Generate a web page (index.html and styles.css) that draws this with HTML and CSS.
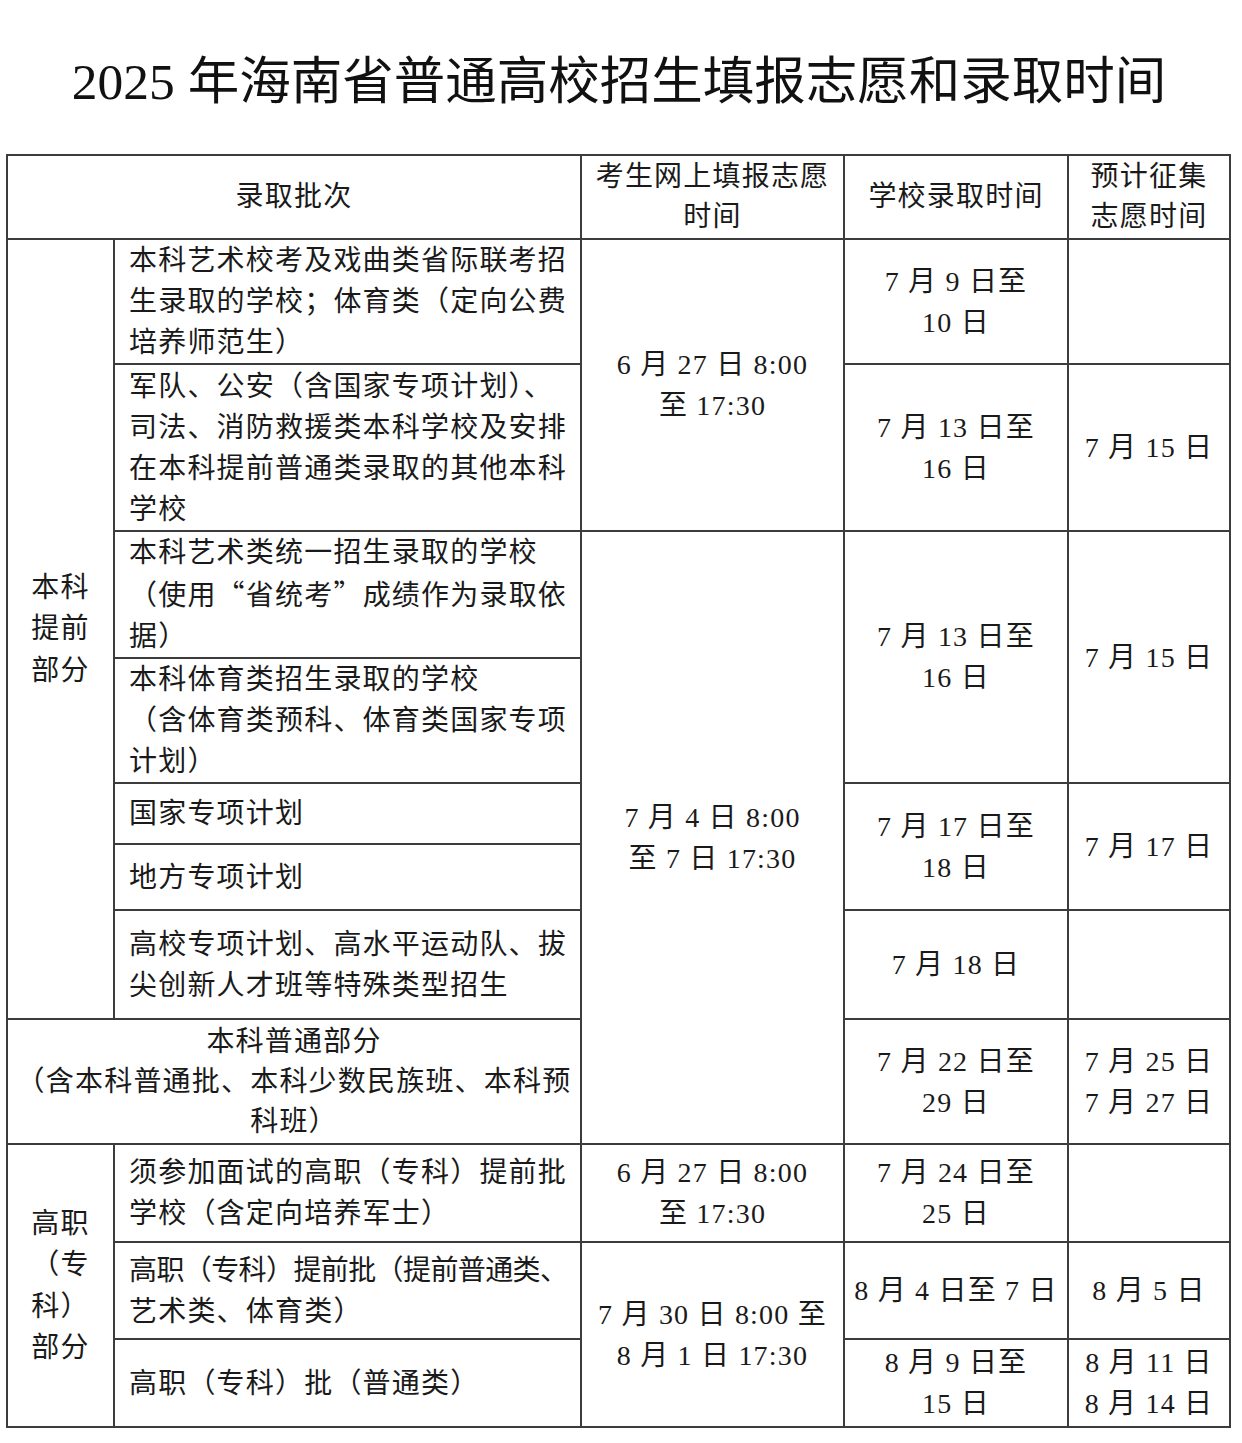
FILE: index.html
```html
<!DOCTYPE html>
<html lang="zh-CN">
<head>
<meta charset="utf-8">
<title>2025年海南省普通高校招生填报志愿和录取时间</title>
<link rel="stylesheet" href="styles.css">
</head>
<body>
<h1 class="title">2025 年海南省普通高校招生填报志愿和录取时间</h1>
<table class="sched">
  <colgroup>
    <col class="c1"><col class="c2"><col class="c3"><col class="c4"><col class="c5">
  </colgroup>
  <tr class="h-head">
    <th colspan="2">录取批次</th>
    <th>考生网上填报志愿<br>时间</th>
    <th>学校录取时间</th>
    <th>预计征集<br>志愿时间</th>
  </tr>
  <tr class="h-r1">
    <td rowspan="7" class="grp">本科<br>提前<br>部分</td>
    <td class="txt">本科艺术校考及戏曲类省际联考招<br>生录取的学校；体育类（定向公费<br>培养师范生）</td>
    <td rowspan="2" class="num">6 月 27 日 8:00<br>至 17:30</td>
    <td class="num">7 月 9 日至<br>10 日</td>
    <td></td>
  </tr>
  <tr class="h-r2">
    <td class="txt">军队、公安（含国家专项计划）、<br>司法、消防救援类本科学校及安排<br>在本科提前普通类录取的其他本科<br>学校</td>
    <td class="num">7 月 13 日至<br>16 日</td>
    <td class="num">7 月 15 日</td>
  </tr>
  <tr class="h-r3">
    <td class="txt">本科艺术类统一招生录取的学校<br>（使用<span class="q">“</span>省统考<span class="q">”</span>成绩作为录取依<br>据）</td>
    <td rowspan="6" class="num">7 月 4 日 8:00<br>至 7 日 17:30</td>
    <td rowspan="2" class="num">7 月 13 日至<br>16 日</td>
    <td rowspan="2" class="num">7 月 15 日</td>
  </tr>
  <tr class="h-r4">
    <td class="txt">本科体育类招生录取的学校<br>（含体育类预科、体育类国家专项<br>计划）</td>
  </tr>
  <tr class="h-r5">
    <td class="txt">国家专项计划</td>
    <td rowspan="2" class="num">7 月 17 日至<br>18 日</td>
    <td rowspan="2" class="num">7 月 17 日</td>
  </tr>
  <tr class="h-r6">
    <td class="txt">地方专项计划</td>
  </tr>
  <tr class="h-r7">
    <td class="txt">高校专项计划、高水平运动队、拔<br>尖创新人才班等特殊类型招生</td>
    <td class="num">7 月 18 日</td>
    <td></td>
  </tr>
  <tr class="h-r8">
    <td colspan="2" class="mid">本科普通部分<br>（含本科普通批、本科少数民族班、本科预<br>科班）</td>
    <td class="num">7 月 22 日至<br>29 日</td>
    <td class="num">7 月 25 日<br>7 月 27 日</td>
  </tr>
  <tr class="h-r9">
    <td rowspan="3" class="grp">高职<br>（专<br>科）<br>部分</td>
    <td class="txt">须参加面试的高职（专科）提前批<br>学校（含定向培养军士）</td>
    <td class="num">6 月 27 日 8:00<br>至 17:30</td>
    <td class="num">7 月 24 日至<br>25 日</td>
    <td></td>
  </tr>
  <tr class="h-r10">
    <td class="txt"><span class="tight">高职（专科）提前批（提前普通类、</span><br>艺术类、体育类）</td>
    <td rowspan="2" class="num">7 月 30 日 8:00 至<br>8 月 1 日 17:30</td>
    <td class="num">8 月 4 日至 7 日</td>
    <td class="num">8 月 5 日</td>
  </tr>
  <tr class="h-r11">
    <td class="txt">高职（专科）批（普通类）</td>
    <td class="num">8 月 9 日至<br>15 日</td>
    <td class="num">8 月 11 日<br>8 月 14 日</td>
  </tr>
</table>
</body>
</html>
```

FILE: styles.css
```css
html, body {
  margin: 0;
  padding: 0;
  background: #ffffff;
}

body {
  font-family: "Liberation Serif", "Noto Sans CJK SC", serif;
  color: #1a1a1a;
  width: 1242px;
}

.title {
  margin: 52px 0 42px 0;
  height: 60px;
  line-height: 60px;
  font-size: 51.5px;
  font-weight: normal;
  text-align: center;
  color: #111;
  letter-spacing: 0;
  padding-right: 4px;
}

.sched {
  margin: 0 0 0 6px;
  border-collapse: collapse;
  table-layout: fixed;
  width: 1223px;
  font-size: 28px;
  line-height: 41px;
  letter-spacing: 1.2px;
}

.c1 { width: 107px; }
.c2 { width: 467px; }
.c3 { width: 263px; }
.c4 { width: 224px; }
.c5 { width: 162px; }

.sched th,
.sched td {
  border: 2px solid #3c3c3c;
  padding: 0;
  vertical-align: middle;
  text-align: center;
  font-weight: normal;
  white-space: nowrap;
}

.sched th {
  line-height: 40px;
}

.sched td.txt {
  text-align: left;
  padding-left: 14px;
}

.sched td.grp {
  line-height: 41.5px;
}

.sched td.mid {
  line-height: 40px;
}

.q {
  font-family: "Noto Sans CJK SC", sans-serif;
}

.tight {
  letter-spacing: -0.6px;
}

.h-head { height: 84px; }
.h-r1 { height: 125px; }
.h-r2 { height: 167px; }
.h-r3 { height: 126px; }
.h-r4 { height: 125px; }
.h-r5 { height: 61px; }
.h-r6 { height: 66px; }
.h-r7 { height: 109px; }
.h-r8 { height: 125px; }
.h-r9 { height: 98px; }
.h-r10 { height: 97px; }
.h-r11 { height: 88px; }
```
